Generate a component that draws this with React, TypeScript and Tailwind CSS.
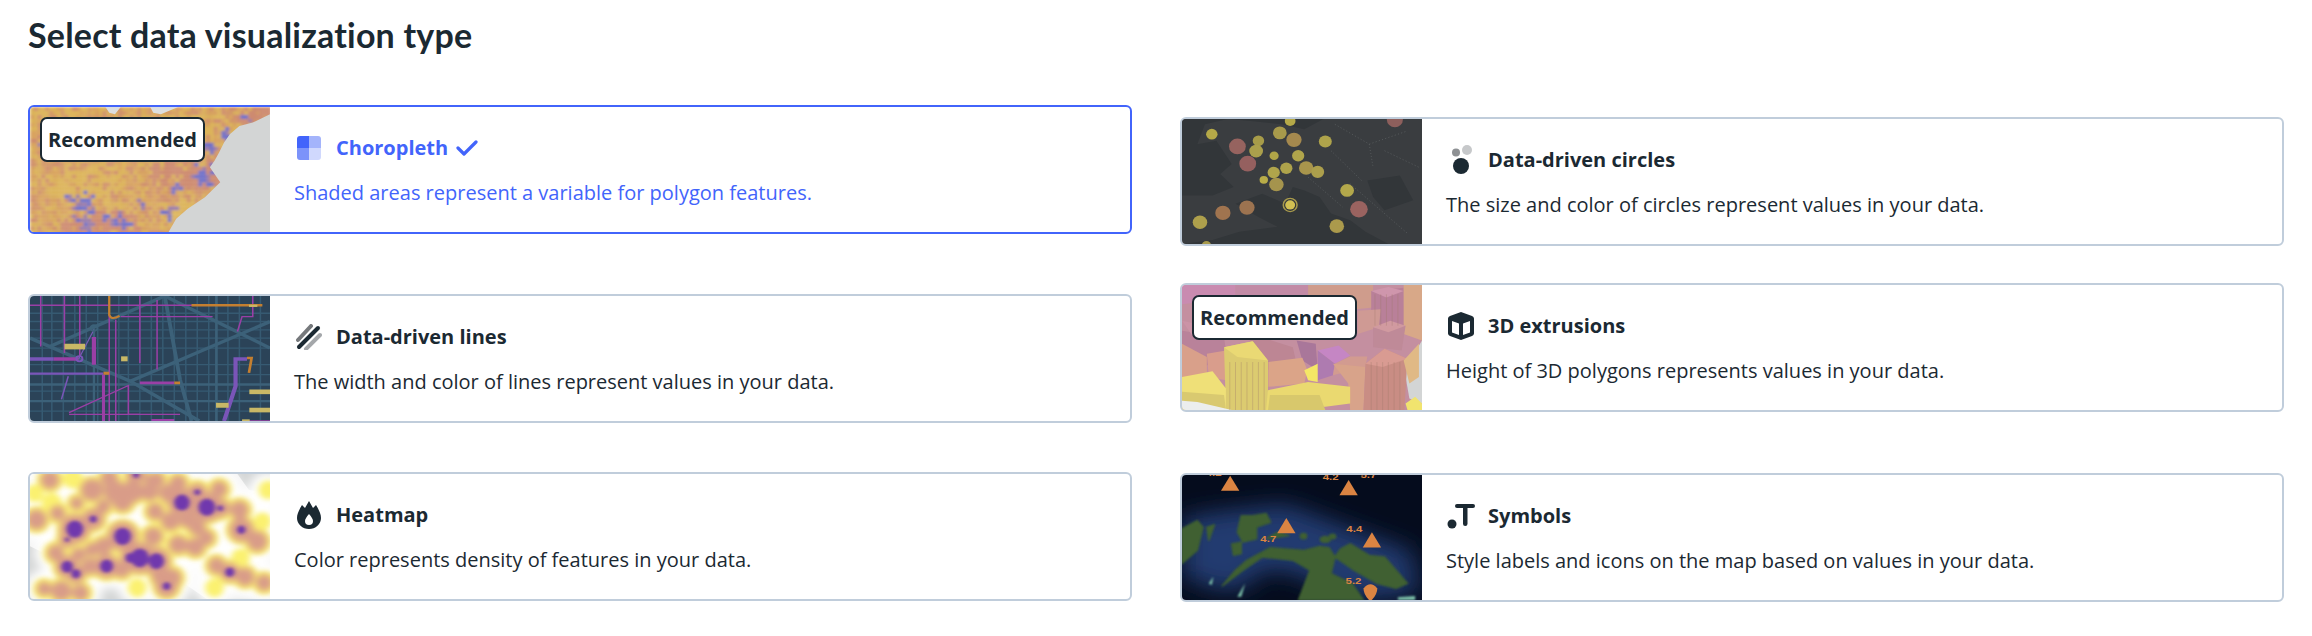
import React from 'react';

// small seeded random so the mosaic stays the same on every render
const seeded = (seed: number) => () => {
  seed = (seed * 16807) % 2147483647;
  return seed / 2147483647;
};

const ChoroplethThumb = () => {
  const rand = seeded(42);
  const warm = ['#d9a45f', '#d6a05f', '#d9ae5c', '#d29668', '#cf8f6c', '#dcb45a'];
  const hubs = [
    [215, 610, 48], [220, 665, 32], [290, 650, 30], [325, 662, 24], [368, 605, 22], [440, 632, 30],
    [530, 515, 42], [545, 435, 26], [590, 395, 24], [640, 345, 22], [175, 580, 14], [455, 560, 20], [100, 430, 10],
  ];
  const cells: React.ReactElement[] = [];
  for (let y = 318; y < 695; y += 12) {
    for (let x = 78; x < 705; x += 10) {
      const band = Math.sin(x / 70 + y / 50) + Math.cos(y / 38 - x / 120);
      let fill = warm[Math.floor(rand() * warm.length)];
      if (band > 0.8) fill = rand() > 0.4 ? '#dcb45a' : fill;
      if (band < -0.7) fill = rand() > 0.35 ? '#cd8a70' : fill;
      for (const [hx, hy, r] of hubs) {
        const d = Math.hypot((x - hx) * 1.1, y - hy);
        if (d < r && rand() > d / r - 0.05) fill = rand() > 0.4 ? '#6f70c8' : '#9a7ba8';
      }
      cells.push(<rect key={`${x}-${y}`} x={x} y={y} width="10.5" height="12.5" fill={fill} />);
    }
  }
  return (
    <svg viewBox="78 318 627 377" preserveAspectRatio="none" className="block h-full w-full">
      <defs>
        <filter id="mosaic" x="0" y="0" width="100%" height="100%"><feGaussianBlur stdDeviation="3.500" /></filter>
      </defs>
      <g filter="url(#mosaic)">{cells}</g>
      <path d="M705 340 L660 365 L625 375 L600 400 L585 425 L572 455 L560 480 L548 500 L575 545 L535 590 L490 625 L460 655 L440 695 L705 695Z" fill="#d3d5d5" />
      <path d="M275 318 L315 318 L300 340 L285 335Z M392 318 L465 318 L420 340 L400 335Z" fill="#dcdedf" />
    </svg>
  );
};

const LinesThumb = () => (
  <svg viewBox="78 48 627 377" preserveAspectRatio="none" className="block h-full w-full">
    <rect x="78" y="48" width="627" height="377" fill="#2b4358" />
    <g stroke="#365a72" strokeWidth="4" fill="none">
      {[110, 135, 165, 195, 225, 255, 310, 335, 365, 395, 425, 455, 485, 515, 545, 595, 625, 680].map((x) => (
        <path key={x} d={`M${x} 48V425`} />
      ))}
      {[100, 125, 150, 175, 205, 255, 285, 335, 365, 395].map((y) => (
        <path key={y} d={`M78 ${y}H705`} />
      ))}
    </g>
    <g stroke="#3c6179" strokeWidth="10" fill="none">
      <path d="M78 175 L340 305 L520 425" />
      <path d="M130 200 L430 48" />
      <path d="M340 305 L705 125" />
      <path d="M430 48 L705 205" />
      <path d="M430 48 L470 300 L500 425" />
      <path d="M78 315H705" strokeWidth="7" />
      <path d="M78 365H705" strokeWidth="7" />
      <path d="M565 48V425" strokeWidth="7" />
      <path d="M245 145L245 425" strokeWidth="6" />
    </g>
    <g stroke="#9a3fa6" strokeWidth="4" fill="none">
      <path d="M78 76H640" />
      <path d="M106 48V200M168 48V220M208 48V230M365 48V250M410 60V270" />
      <path d="M315 110H555" />
      <path d="M285 100V425M302 120V425" />
      <path d="M660 48V110H632L620 155" />
      <path d="M180 400L335 318V405H365" />
      <path d="M180 405H470" />
      <path d="M395 422H455" strokeWidth="6" />
      <path d="M270 285V425" strokeWidth="8" />
      <path d="M245 172V255" strokeWidth="11" />
      <path d="M365 310H455" strokeWidth="9" />
      <path d="M140 238H205" strokeWidth="10" />
      <path d="M205 238L245 150" strokeWidth="3" stroke="#7a5bb8" />
      <path d="M650 425H705" />
    </g>
    <g stroke="#7a55b8" fill="none">
      <path d="M78 238H140" strokeWidth="10" />
      <path d="M78 282H270" strokeWidth="7" />
      <path d="M160 360L178 290" strokeWidth="4" />
      <path d="M645 238H615V320L585 425" strokeWidth="11" />
    </g>
    <g stroke="#c47f30" fill="none">
      <path d="M285 48V105Q290 122 312 108" strokeWidth="6" />
      <path d="M500 76H685" strokeWidth="7" />
      <path d="M645 235H657L650 280" strokeWidth="7" />
      <path d="M455 310H470M270 281H285" strokeWidth="9" />
    </g>
    <g fill="#c9b866">
      <rect x="168" y="192" width="54" height="17" />
      <rect x="316" y="230" width="17" height="15" />
      <rect x="651" y="330" width="54" height="14" />
      <rect x="651" y="385" width="54" height="14" />
      <rect x="564" y="370" width="33" height="15" />
      <rect x="632" y="420" width="20" height="5" />
      <rect x="650" y="74" width="22" height="7" />
    </g>
    <g fill="none" stroke="#3c6179" strokeWidth="5">
      <circle cx="245" cy="145" r="9" />
      <circle cx="207" cy="237" r="8" stroke="#7a55b8" />
    </g>
  </svg>
);

const heatBlobs: [number, number, number, number][] = [
  [130, 60, 14, 1], [95, 180, 16, 1], [195, 208, 26, 3], [175, 240, 11, 2], [243, 178, 17, 2], [320, 230, 26, 3],
  [240, 90, 18, 1], [300, 95, 18, 1], [345, 95, 18, 1], [320, 125, 16, 1], [390, 95, 14, 1], [355, 45, 14, 2],
  [440, 100, 14, 1], [475, 128, 24, 3], [515, 97, 14, 2], [540, 142, 26, 3], [575, 145, 14, 2], [572, 88, 12, 1],
  [465, 70, 12, 1], [405, 155, 12, 1], [445, 185, 14, 1], [490, 180, 12, 1], [515, 203, 12, 1], [625, 150, 14, 1],
  [630, 210, 20, 2], [672, 245, 16, 1], [365, 295, 28, 3], [408, 305, 24, 3], [340, 295, 15, 3], [465, 255, 14, 1],
  [510, 262, 14, 1], [400, 230, 14, 1], [270, 260, 13, 1], [240, 270, 9, 1], [175, 322, 18, 3], [198, 343, 14, 3],
  [278, 320, 20, 3], [235, 320, 12, 1], [318, 330, 12, 1], [205, 285, 9, 1], [435, 380, 18, 2], [450, 355, 14, 1],
  [420, 350, 14, 1], [600, 338, 14, 3], [565, 318, 12, 1], [640, 352, 14, 1], [115, 388, 9, 1], [160, 395, 16, 1],
  [358, 385, 6, 0], [560, 385, 6, 0], [628, 295, 6, 0], [685, 185, 5, 0], [90, 100, 5, 0], [700, 90, 6, 0],
  [270, 140, 9, 1], [150, 160, 10, 1], [145, 280, 12, 1], [210, 400, 12, 1], [540, 235, 10, 1], [690, 370, 12, 1],
  [410, 60, 10, 1], [285, 55, 12, 1], [190, 55, 8, 0], [135, 130, 8, 0], [200, 130, 8, 1], [395, 60, 8, 1],
];

const HeatmapThumb = () => (
  <svg viewBox="78 42 627 377" preserveAspectRatio="none" className="block h-full w-full">
    <defs>
      <filter id="soft" x="-10%" y="-10%" width="120%" height="120%"><feGaussianBlur stdDeviation="14" /></filter>
      <filter id="mid" x="-10%" y="-10%" width="120%" height="120%"><feGaussianBlur stdDeviation="8" /></filter>
      <filter id="tan" x="-10%" y="-10%" width="120%" height="120%"><feGaussianBlur stdDeviation="10" /></filter>
      <filter id="core" x="-10%" y="-10%" width="120%" height="120%"><feGaussianBlur stdDeviation="5" /></filter>
    </defs>
    <rect x="78" y="42" width="627" height="377" fill="#f3f3f3" />
    <path d="M78 60L140 42V100L78 130Z M78 260L150 300L135 419H78Z M230 350L440 340L540 419H230Z M620 42H705V100L650 90Z" fill="#d3d5d5" />
    <path d="M560 419L575 300L640 280L705 340V419Z" fill="#ededed" stroke="#cfd1d1" />
    <g filter="url(#soft)">
      {heatBlobs.map(([x, y, r], i) => <ellipse key={i} cx={x} cy={y} rx={r + 44} ry={r + 48} fill="#fff" />)}
    </g>
    <g filter="url(#mid)">
      {heatBlobs.map(([x, y, r], i) => <ellipse key={i} cx={x} cy={y} rx={r * 1.2 + 18} ry={r * 1.2 + 22} fill="#fbf170" />)}
    </g>
    <g filter="url(#tan)">
      {heatBlobs.map(([x, y, r, l], i) => l > 0 && <ellipse key={i} cx={x} cy={y} rx={r * 1.2 + 8} ry={r * 1.3 + 10} fill="#d99c88" />)}
    </g>
    <g filter="url(#core)">
      {heatBlobs.map(([x, y, r, l], i) => l > 1 && <ellipse key={i} cx={x} cy={y} rx={r * (l > 2 ? 0.85 : 0.55)} ry={r * (l > 2 ? 1 : 0.65)} fill="#7039ad" />)}
    </g>
  </svg>
);

const dots: [number, number, number, string][] = [
  [108, 100, 15, '#b5a948'], [175, 137, 22, '#96635f'], [230, 120, 15, '#a79c49'], [286, 96, 18, '#a89a4b'],
  [323, 117, 20, '#a5894e'], [405, 122, 17, '#aea34b'], [224, 151, 18, '#aba04c'], [271, 165, 12, '#b0a548'],
  [334, 165, 16, '#b0a54b'], [202, 189, 22, '#95605f'], [303, 203, 16, '#aea34b'], [270, 216, 16, '#b0a54b'],
  [355, 202, 19, '#a8954c'], [385, 214, 17, '#ac9f4c'], [244, 238, 11, '#b8ac48'], [277, 252, 19, '#a5944d'],
  [462, 270, 18, '#b3a84b'], [313, 314, 13, '#d2c052'], [200, 322, 20, '#9c7350'], [137, 338, 20, '#a0744f'],
  [493, 327, 23, '#9a6360'], [77, 366, 19, '#aea04c'], [435, 378, 19, '#ab9a4c'], [313, 60, 14, '#b5a948'],
  [587, 56, 21, '#8d5f5c'], [94, 436, 12, '#a89a4c'],
];

const CirclesThumb = () => (
  <svg viewBox="30 54 628 378" preserveAspectRatio="none" className="block h-full w-full">
    <rect x="30" y="54" width="628" height="378" fill="#3a3d40" />
    <g fill="#323639">
      <path d="M30 54H150L90 70L70 130L120 120L160 190L130 220L165 260L110 285H30Z" />
      <path d="M150 54H400L350 85L290 70L210 60Z" />
      <path d="M320 260L300 310L240 280L170 310L230 350L280 380L180 395L110 420L30 432H570L510 395L470 360L420 340L390 290L350 270Z" />
      <path d="M515 240L600 225L635 300L560 330L530 290Z" />
    </g>
    <g stroke="#5f6264" strokeWidth="2" strokeDasharray="3 6" fill="none">
      <path d="M430 70L520 130L620 90M360 230L450 320M520 130L530 200M560 150L650 200M470 250L620 400M420 150L500 240" />
    </g>
    {dots.map(([x, y, r, c], i) => <ellipse key={i} cx={x} cy={y} rx={r} ry={r * 1.08} fill={c} />)}
    <ellipse cx="313" cy="314" rx="18" ry="20" fill="none" stroke="#a89a4c" strokeWidth="4" />
  </svg>
);

const ExtrusionThumb = () => (
  <svg viewBox="30 42 628 378" preserveAspectRatio="none" className="block h-full w-full">
    <rect x="30" y="42" width="628" height="378" fill="#c48fa0" />
    <g>
      <path d="M30 42H170V80L30 100Z" fill="#c98bb0" />
      <path d="M170 42H360V90H170Z" fill="#c28ba6" />
      <path d="M360 42H530V110L360 130Z" fill="#cf9c8c" />
      <path d="M525 60L610 50L612 190L525 160Z" fill="#b98099" />
      <path d="M525 60L570 48L610 60L565 80Z" fill="#cf96ac" />
      <path d="M610 42H658V210L610 190Z" fill="#d8a888" />
      <path d="M30 180L140 200L150 280L30 290Z" fill="#b9829a" />
      <path d="M30 150L90 165L140 200L60 200Z" fill="#cb93a6" />
      <path d="M210 190L320 230L330 280L250 300L200 270Z" fill="#bd8694" />
      <path d="M490 120L550 115L545 170L490 190Z" fill="#cf9a94" />
      <path d="M530 170L615 165L605 240L530 230Z" fill="#bf8a98" />
      <path d="M530 170L575 150L615 165L570 185Z" fill="#d19aa0" />
      <path d="M330 210L380 220L385 300L345 270Z" fill="#a9779a" />
      <path d="M385 240L440 225L470 255L430 280Z" fill="#c586c4" />
      <path d="M385 240L430 280L425 315L385 330Z" fill="#ae7bb0" />
      <path d="M430 280L470 258L515 258L510 290L425 315Z" fill="#d29b90" />
      <path d="M425 280L510 290L505 420H470L465 340Z" fill="#d8a38a" />
      <path d="M256 275L345 262L358 300L350 340L256 350Z" fill="#dba488" />
      <path d="M95 250L145 240L145 330L100 320Z" fill="#d99d8c" />
      <path d="M30 220L95 260L95 320L30 330Z" fill="#d9a08a" />
      <path d="M612 300L658 210V400L625 385Z" fill="#d3d5d5" />
      <path d="M510 280L560 235L620 265L612 420H505Z" fill="#c98d84" />
      <path d="M510 280L560 235L620 265L555 290Z" fill="#d99b92" />
      <path d="M610 270L650 220V320L625 340Z" fill="#e0b985" />
      <path d="M615 400L640 380L658 400V420H620Z" fill="#f1e46e" />
      <path d="M140 230L215 212L255 270L255 420H145Z" fill="#dccb70" />
      <path d="M140 230L215 212L255 270L175 260Z" fill="#ead974" />
      <path d="M30 320L110 303L145 355V420H30Z" fill="#efe078" />
      <path d="M30 365L140 375L145 420H30Z" fill="#d9c970" />
      <path d="M255 360L360 335L470 350V400L405 410L250 420Z" fill="#ead970" />
      <path d="M260 375L390 375L405 420H255Z" fill="#d8c86c" />
      <path d="M350 300L385 280V335L360 330Z" fill="#f4e766" />
      <path d="M30 392L70 396L160 420H30Z" fill="#eceeee" />
    </g>
    <g stroke="#9c7868" strokeWidth="2" opacity="0.45">
      {[155, 170, 185, 200, 215, 230, 245, 525, 540, 555, 570, 585, 600].map((x) => <path key={x} d={`M${x} 275V420`} />)}
      {[535, 550, 565, 580, 595].map((x) => <path key={x} d={`M${x} 70V165`} />)}
    </g>
  </svg>
);

const tri = (x: number, y: number) => `M${x} ${y - 46}L${x + 24} ${y}H${x - 24}Z`;

const SymbolsThumb = () => (
  <svg viewBox="30 42 628 378" preserveAspectRatio="none" className="block h-full w-full">
    <defs>
      <filter id="glow" x="-30%" y="-30%" width="160%" height="160%"><feGaussianBlur stdDeviation="34" /></filter>
      <filter id="land" x="-5%" y="-5%" width="110%" height="110%"><feGaussianBlur stdDeviation="3" /></filter>
    </defs>
    <rect x="30" y="42" width="628" height="378" fill="#050c1d" />
    <g filter="url(#glow)" fill="#213a70">
      <path d="M30 170L140 150L300 130L440 190L630 270L650 400L520 420L420 400L330 340L240 330L190 390H120L30 350Z" />
    </g>
    <g fill="#3f6030" stroke="#3f6030" strokeWidth="4" strokeLinejoin="round" filter="url(#land)">
      <path d="M30 205L70 180L85 200L70 270L30 310Z" />
      <path d="M95 200L115 192L100 240Z" />
      <path d="M185 165L215 165L250 158L262 185L225 200L225 235L190 245L175 215Z" />
      <path d="M160 250L185 245L185 280L165 285Z" />
      <path d="M135 378L170 330L200 300L260 262L350 270L390 258L415 262L430 290L445 265L470 250L520 285L560 290L620 370L590 385L540 370L480 330L430 290L420 340L475 370L505 420H335L365 330L320 300L240 290L190 330Z" />
      <ellipse cx="348" cy="227" rx="8" ry="8" />
      <ellipse cx="405" cy="237" rx="13" ry="9" />
      <ellipse cx="424" cy="228" rx="8" ry="7" />
      <path d="M280 215L310 225L250 235Z" />
    </g>
    <g fill="#7fc4ab" filter="url(#land)">
      <path d="M100 370L112 350L108 375Z M175 410L195 370L185 410Z M595 412L640 408V420H595Z" />
    </g>
    <g fill="#db8442">
      <path d={tri(156, 90)} />
      <path d={tri(466, 103)} />
      <path d={tri(303, 218)} />
      <path d={tri(527, 261)} />
      <path d="M505 385Q523 360 541 385Q541 405 523 424Q505 405 505 385Z" />
    </g>
    <g fill="#db8442" fontFamily="'Liberation Sans', sans-serif" fontWeight="700" fontSize="30">
      <text x="235" y="244">4.7</text>
      <text x="460" y="214">4.4</text>
      <text x="458" y="373">5.2</text>
      <text x="398" y="56">4.2</text>
      <text x="497" y="52">5.7</text>
      <text x="92" y="46">4.2</text>
    </g>
  </svg>
);

const ChoroplethIcon = () => (
  <svg viewBox="0 0 24 24" className="h-6 w-6">
    <path d="M12 0H3a3 3 0 0 0-3 3v9h12Z" fill="#4264fb" />
    <path d="M12 0h9a3 3 0 0 1 3 3v9H12Z" fill="#a4b4fb" />
    <path d="M12 12H0v9a3 3 0 0 0 3 3h9Z" fill="#7c93fa" />
    <path d="M12 12h12v9a3 3 0 0 1-3 3h-9Z" fill="#d0d8fd" />
  </svg>
);

const LinesIcon = () => (
  <svg viewBox="0 0 26 26" className="h-[26px] w-[26px]" fill="none" strokeLinecap="round" strokeWidth="4">
    <path d="M2 16 15 2" stroke="#76797c" />
    <path d="M3 23 22 4" stroke="#1b2932" />
    <path d="M10 25 24 11" stroke="#a4a7aa" />
  </svg>
);

const HeatIcon = () => (
  <svg viewBox="0 0 24 28" className="h-7 w-6">
    <path d="M12 0l4 7 3-3c3 5 5 9 5 13a12 11 0 0 1-24 0c0-4 2-8 5-13l3 3Z" fill="#1b2932" />
    <path d="M12 13c2.500 3 4 5 4 7a4 4 0 0 1-8 0c0-2 1.500-4 4-7Z" fill="#fff" />
  </svg>
);

const CirclesIcon = () => (
  <svg viewBox="0 0 24 30" className="h-[30px] w-6">
    <circle cx="7" cy="7.500" r="4" fill="#8e9194" />
    <circle cx="18" cy="5" r="5" fill="#c6c8ca" />
    <circle cx="12" cy="21" r="8" fill="#1b2932" />
  </svg>
);

const CubeIcon = () => (
  <svg viewBox="0 0 26 28" className="h-7 w-[26px]">
    <path d="M13 0l11 4a3 3 0 0 1 2 3v14a3 3 0 0 1-2 3l-11 4-11-4a3 3 0 0 1-2-3V7a3 3 0 0 1 2-3Z" fill="#1b2932" />
    <path d="M4 9l7 2.500V23l-7-2.500ZM22 9l-7 2.500V23l7-2.500Z" fill="#fff" />
  </svg>
);

const SymbolsIcon = () => (
  <svg viewBox="0 0 28 26" className="h-[26px] w-7" fill="#1b2932">
    <circle cx="5" cy="21" r="4.500" />
    <rect x="8" y="1" width="20" height="4" rx="2" />
    <rect x="16" y="1" width="4.500" height="22" rx="2.200" />
  </svg>
);

type CardProps = {
  title: string;
  desc: string;
  icon: React.ReactNode;
  thumb: React.ReactNode;
  recommended?: boolean;
  selected?: boolean;
  className?: string;
};

const Card = ({ title, desc, icon, thumb, recommended, selected, className }: CardProps) => (
  <div
    className={`relative flex h-[129px] overflow-hidden rounded-[6px] border-2 bg-white ${selected ? 'border-[#4264fb]' : 'border-[#c0cddb]'} ${className ?? ''}`}
  >
    <div className="h-full w-[240px] shrink-0">{thumb}</div>
    <div className={`flex flex-col pl-6 pt-[26px] ${selected ? 'text-[#4264fb]' : 'text-[#1b2932]'}`}>
      <div className="flex h-[30px] items-center gap-3">
        <div className="flex w-[30px] shrink-0 items-center justify-center">{icon}</div>
        <span className="text-[20px] font-bold">{title}</span>
        {selected && (
          <svg viewBox="0 0 22 18" className="-ml-1 h-[18px] w-[22px]" fill="none" stroke="#4264fb" strokeWidth="3.200" strokeLinecap="round" strokeLinejoin="round">
            <path d="M2 9l6 6L20 3" />
          </svg>
        )}
      </div>
      <p className="mt-4 text-[20px] leading-[28px]">{desc}</p>
    </div>
    {recommended && (
      <div className="absolute left-[10px] top-[10px] flex h-[45px] w-[165px] items-center justify-center rounded-[7px] border-2 border-[#1b2932] bg-white text-[20px] font-bold text-[#1b2932]">
        Recommended
      </div>
    )}
  </div>
);

export default function App() {
  return (
    <div className="h-[636px] w-[2312px] bg-white px-[28px] font-['Open_Sans',sans-serif]">
      <h1 className="h-[105px] pt-[13px] font-['Lato',sans-serif] text-[34px] font-bold leading-[44px] tracking-[0.2px] text-[#1b2932]">
        Select data visualization type
      </h1>
      <div className="flex gap-[48px]">
        <div className="flex w-[1104px] flex-col">
          <Card
            selected
            recommended
            title="Choropleth"
            desc="Shaded areas represent a variable for polygon features."
            icon={<ChoroplethIcon />}
            thumb={<ChoroplethThumb />}
          />
          <Card
            className="mt-[60px]"
            title="Data-driven lines"
            desc="The width and color of lines represent values in your data."
            icon={<LinesIcon />}
            thumb={<LinesThumb />}
          />
          <Card
            className="mt-[49px]"
            title="Heatmap"
            desc="Color represents density of features in your data."
            icon={<HeatIcon />}
            thumb={<HeatmapThumb />}
          />
        </div>
        <div className="flex w-[1104px] flex-col pt-[12px]">
          <Card
            title="Data-driven circles"
            desc="The size and color of circles represent values in your data."
            icon={<CirclesIcon />}
            thumb={<CirclesThumb />}
          />
          <Card
            className="mt-[37px]"
            recommended
            title="3D extrusions"
            desc="Height of 3D polygons represents values in your data."
            icon={<CubeIcon />}
            thumb={<ExtrusionThumb />}
          />
          <Card
            className="mt-[61px]"
            title="Symbols"
            desc="Style labels and icons on the map based on values in your data."
            icon={<SymbolsIcon />}
            thumb={<SymbolsThumb />}
          />
        </div>
      </div>
    </div>
  );
}
